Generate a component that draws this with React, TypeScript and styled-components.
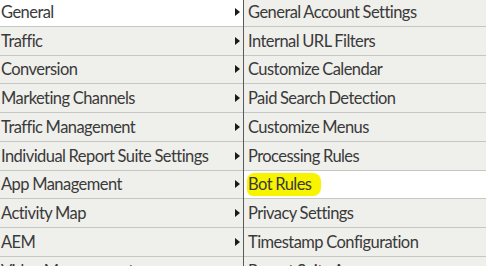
import React from "react";
import styled, { createGlobalStyle } from "styled-components";

const Global = createGlobalStyle`
  html, body { margin: 0; padding: 0; background: #efefeb; overflow: hidden; }
  body { width: 486px; height: 266px; }
`;

const Menus = styled.div`
  display: flex;
  width: 486px;
  height: 266px;
  overflow: hidden;
  font-family: Lato, "Liberation Sans", sans-serif;
  font-size: 16.5px;
  color: #3a3a3a;
`;

const Column = styled.div<{ $width: number; $divider?: boolean }>`
  display: flex;
  flex-direction: column;
  flex: 0 0 ${(p) => p.$width}px;
  margin-top: -2px;
  border-right: ${(p) => (p.$divider ? "1px solid #5a5a5a" : "none")};
`;

const Row = styled.div<{ $active?: boolean; $pad: number }>`
  box-sizing: border-box;
  flex: 0 0 28.75px;
  display: flex;
  align-items: center;
  padding-left: ${(p) => p.$pad}px;
  padding-right: 3px;
  background: ${(p) => (p.$active ? "#ffffff" : "#efefeb")};
  border-bottom: 1px solid #c6c6c2;
  white-space: nowrap;
`;

const Label = styled.span`
  flex: 1 1 auto;
  letter-spacing: -0.55px;
  word-spacing: -0.5px;
`;

const Marked = styled.span`
  background: #f8f400;
  border-radius: 7px 8px 8px 6px;
  padding: 1px 10px 2px 1px;
  margin-left: -1px;
`;

const Arrow = styled.span`
  width: 0;
  height: 0;
  border-top: 4px solid transparent;
  border-bottom: 4px solid transparent;
  border-left: 5px solid #1a1a1a;
`;

const left = [
  "General",
  "Traffic",
  "Conversion",
  "Marketing Channels",
  "Traffic Management",
  "Individual Report Suite Settings",
  "App Management",
  "Activity Map",
  "AEM",
  "Video Management",
];

const right = [
  "General Account Settings",
  "Internal URL Filters",
  "Customize Calendar",
  "Paid Search Detection",
  "Customize Menus",
  "Processing Rules",
  "Bot Rules",
  "Privacy Settings",
  "Timestamp Configuration",
  "Report Suite Access",
];

export default function App() {
  return (
    <>
      <Global />
      <Menus>
        <Column $width={243} $divider>
          {left.map((t, i) => (
            <Row key={t} $pad={1} $active={i === 0}>
              <Label>{t}</Label>
              <Arrow />
            </Row>
          ))}
        </Column>
        <Column $width={242}>
          {right.map((t, i) => (
            <Row key={t} $pad={4} $active={i === 6}>
              <Label>{i === 6 ? <Marked>{t}</Marked> : t}</Label>
            </Row>
          ))}
        </Column>
      </Menus>
    </>
  );
}
